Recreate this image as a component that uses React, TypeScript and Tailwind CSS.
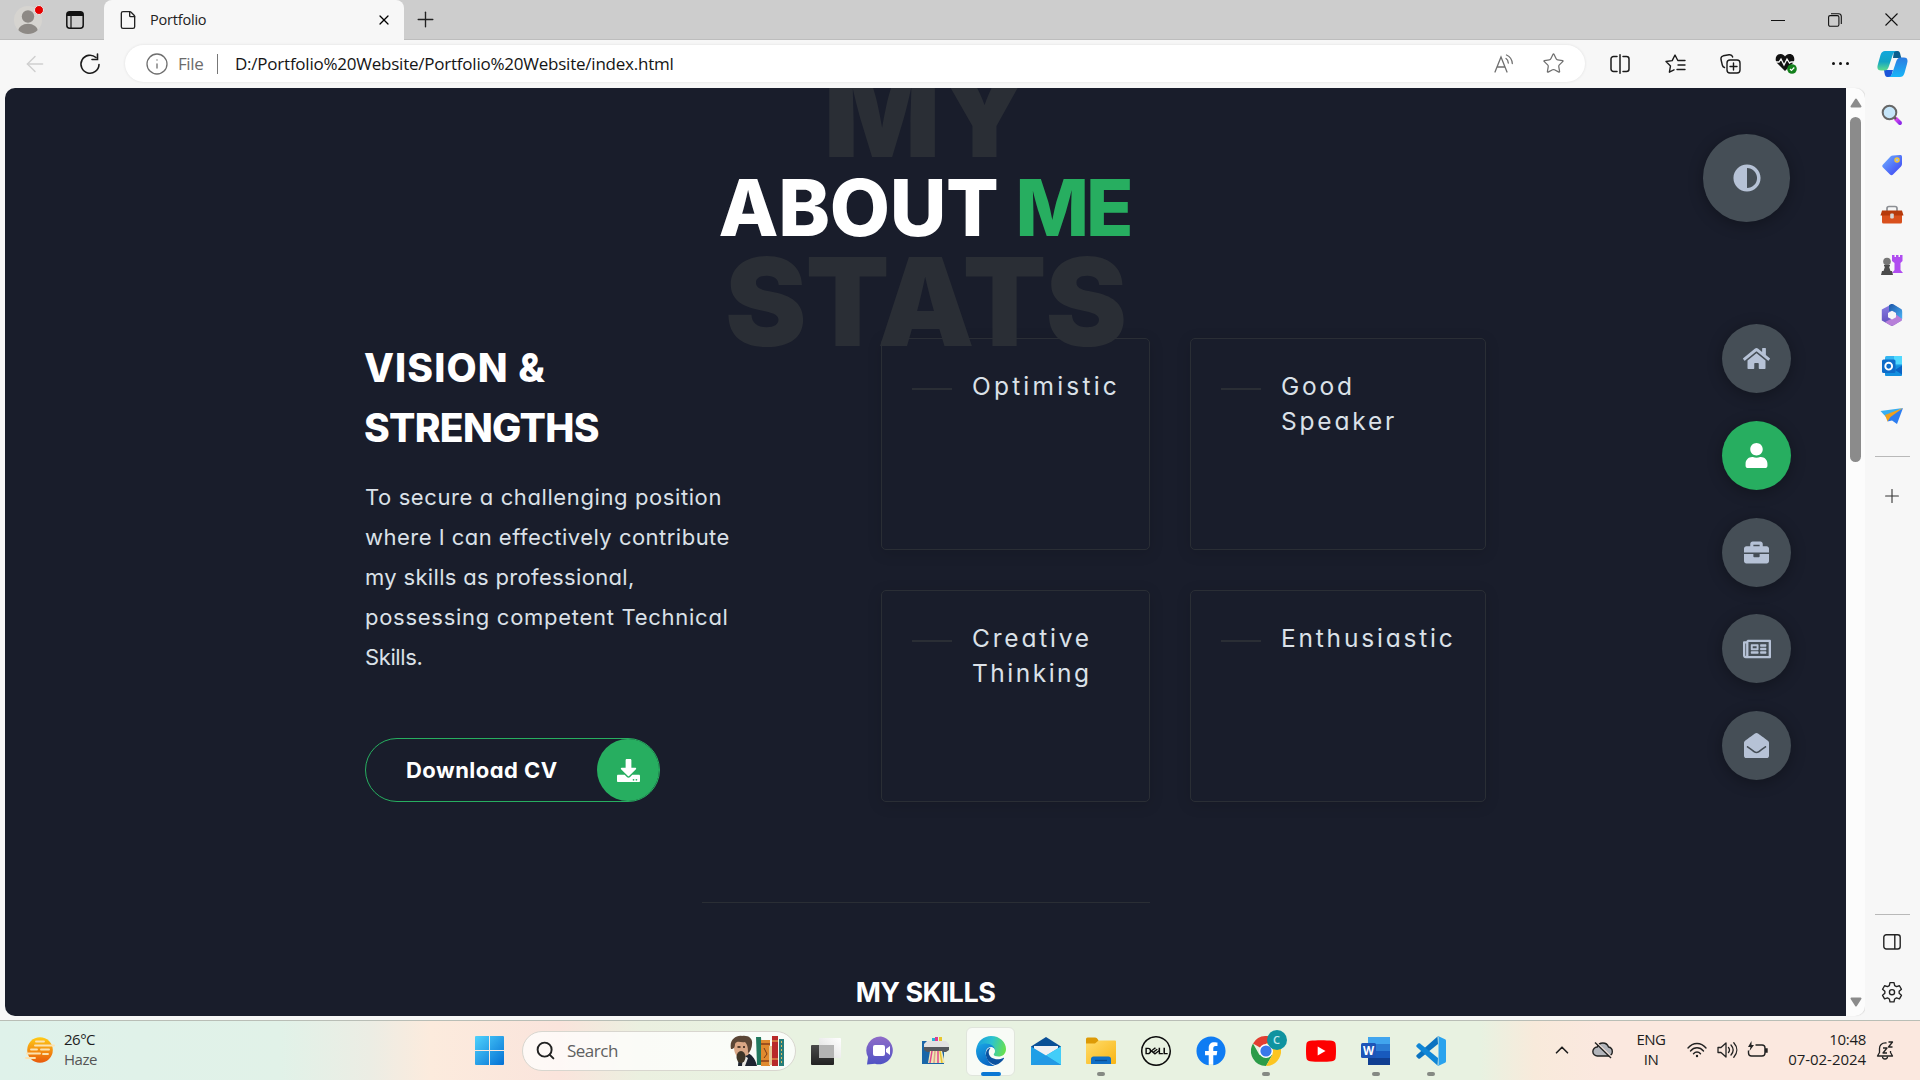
import type { ReactNode } from 'react';
import { ArrowLeft, ChevronUp, File, Info, Plus, Search, Star, X } from 'lucide-react';
import { FaAdjust, FaBriefcase, FaDownload, FaEnvelopeOpen, FaFacebook, FaHome, FaRegNewspaper, FaUser } from 'react-icons/fa';
import { SiDell } from 'react-icons/si';

/* ---------- Browser chrome ---------- */

function TabBar() {
  return (
    <div className="flex h-10 shrink-0 items-stretch border-b border-[#bdbdbd] bg-[#cdcdcd]">
      <div className="flex w-[104px] items-start pl-[14px] pt-[6px]">
        <div className="relative h-7 w-7">
          <svg width="28" height="28" viewBox="0 0 28 28">
            <defs>
              <clipPath id="avatar"><circle cx="14" cy="14" r="14" /></clipPath>
            </defs>
            <g clipPath="url(#avatar)">
              <rect width="28" height="28" fill="#d6d4d0" />
              <circle cx="14" cy="10.5" r="6.2" fill="#8d8985" />
              <ellipse cx="14" cy="25" rx="10" ry="7.2" fill="#8d8985" />
            </g>
          </svg>
          <span className="absolute -top-[1px] left-[20px] h-[10px] w-[10px] rounded-full border border-[#e8e8e8] bg-[#e60000]" />
        </div>
        <svg className="ml-6 mt-[5px]" width="18" height="18" viewBox="0 0 18 18" fill="none">
          <rect x="0.8" y="0.8" width="16.4" height="16.4" rx="3" stroke="#111" strokeWidth="1.5" />
          <path d="M1 5V3.5A2.5 2.5 0 0 1 3.5 1h11A2.5 2.5 0 0 1 17 3.500V5z" fill="#111" />
          <path d="M5 5v12" stroke="#111" strokeWidth="1.2" />
        </svg>
      </div>
      <div className="relative -mb-px flex w-[300px] items-center rounded-t-lg bg-[#f7f7f7] pl-[14px] pr-[12px]">
        <File className="h-[22px] w-[20px] text-[#222]" strokeWidth={1.6} />
        <span className="ml-[12px] font-['Open_Sans'] text-[14.5px] leading-5 tracking-[-0.2px] text-[#222]">Portfolio</span>
        <X className="ml-auto h-[16px] w-[16px] text-black" strokeWidth={1.9} />
      </div>
      <Plus className="ml-[9px] mt-[7px] h-[25px] w-[25px] text-[#222]" strokeWidth={1.3} />
      <div className="ml-auto flex items-center text-[#111]">
        <div className="flex w-[57px] justify-center"><svg width="14" height="14"><path d="M0 7.500h14" stroke="#111" strokeWidth="1" /></svg></div>
        <div className="flex w-[57px] justify-center">
          <svg width="14" height="14" viewBox="0 0 14 14" fill="none" stroke="#111" strokeWidth="1.1">
            <rect x="0.600" y="2.600" width="10.300" height="10.600" rx="1.500" />
            <path d="M3 .7h7.500a2.800 2.800 0 0 1 2.800 2.800V11" />
          </svg>
        </div>
        <div className="flex w-[57px] justify-center">
          <svg width="13" height="13" viewBox="0 0 13 13" stroke="#111" strokeWidth="1.1"><path d="M.5.5l12 12M12.500.5l-12 12" /></svg>
        </div>
      </div>
    </div>
  );
}

function Copilot() {
  return (
    <svg width="31" height="28" viewBox="0 0 31 28">
      <defs>
        <linearGradient id="cpA" x1="0" y1="0" x2="0" y2="1"><stop stopColor="#12a8dc" /><stop offset=".55" stopColor="#13a4c4" /><stop offset="1" stopColor="#5edc8c" /></linearGradient>
        <linearGradient id="cpB" x1="0" y1="0" x2="0" y2="1"><stop stopColor="#2c7be0" /><stop offset="1" stopColor="#18b6f8" /></linearGradient>
      </defs>
      <path d="M17 1h3.500c2 0 2.500 1.500 3 4l.8 3H16z" fill="#0b5f8e" />
      <path d="M14 27h-3.500c-2 0-2.500-1.500-3-4L7 20h9z" fill="#1b55d8" />
      <path d="M8 1h12c-3 0-4 3-5 6l-3 9c-1 3-2 4.500-5 4.500H4C0 20.500 0 17 1 14L3.500 5C4.500 2 6 1 8 1z" fill="url(#cpA)" />
      <path d="M23 27H11c3 0 4-3 5-6l3-9c1-3 2-4.500 5-4.500h3c4 0 4 3.500 3 6.500L27.500 23c-1 3-2.500 4-4.500 4z" fill="url(#cpB)" />
    </svg>
  );
}

function Toolbar() {
  return (
    <div className="flex h-12 shrink-0 items-center bg-[#f7f7f7] pb-px">
      <ArrowLeft className="ml-[22px] h-[26px] w-[26px] text-[#cfcfcf]" strokeWidth={1.3} />
      <svg className="ml-[31px]" width="22" height="22" viewBox="0 0 22 22" fill="none" stroke="#1b1b1b" strokeWidth="1.6" strokeLinecap="round">
        <path d="M20 11.500A9 9 0 1 1 17 4.500" />
        <path d="M18.500 1v5.500H13" />
      </svg>
      <div className="ml-[24px] flex h-[37px] w-[1460px] items-center rounded-full bg-white pl-[20px] pr-[20px] shadow-[0_0_3px_rgba(0,0,0,0.1)]">
        <Info className="h-[24px] w-[24px] text-[#6f6f6f]" strokeWidth={1.3} />
        <span className="ml-[9px] w-[30px] font-['Open_Sans'] text-[17px] tracking-[-0.4px] text-[#6b6b6b]">File</span>
        <span className="ml-[9px] h-[20px] w-px bg-[#777]" />
        <span className="ml-[17px] whitespace-nowrap font-['Open_Sans'] text-[17px] tracking-[-0.23px] text-[#151515]">
          D:/Portfolio%20Website/Portfolio%20Website/index.html
        </span>
        <svg className="ml-auto" width="20" height="20" viewBox="0 0 20 20" fill="none" stroke="#6f6f6f" strokeWidth="1.3" strokeLinecap="round">
          <path d="M1 18L7 3l6 15M3 13h8" />
          <path d="M12 4.500c1.500 1 2.200 2.500 2.300 4.500M12.500 1c3.300 1.500 5.500 4.500 5.800 8.500" />
        </svg>
        <Star className="ml-[28px] h-[23px] w-[23px] text-[#6f6f6f]" strokeWidth={1.3} />
      </div>
      <div className="ml-[7px] flex items-center">
        <div className="flex w-[55px] justify-center">
          <svg width="20" height="20" viewBox="0 0 20 20" fill="none" stroke="#1b1b1b" strokeWidth="1.500" strokeLinecap="round">
            <path d="M7 2.500H3.500a2.500 2.500 0 0 0-2.500 2.500v10a2.500 2.500 0 0 0 2.500 2.500H7M13 2.500h3.500A2.500 2.500 0 0 1 19 5v10a2.500 2.500 0 0 1-2.500 2.500H13M10 .8v18.400" />
          </svg>
        </div>
        <div className="flex w-[56px] justify-center">
          <svg width="21" height="20" viewBox="0 0 21 20" fill="none" stroke="#1b1b1b" strokeWidth="1.400" strokeLinecap="round" strokeLinejoin="round">
            <path d="M14 6.500h-1.200L10 1 7.200 6.600 1 7.500l4.500 4.400L4.400 18.200 9 15.800M14 6.500h6M13 11h7M12 15.500h8" />
          </svg>
        </div>
        <div className="flex w-[55px] justify-center">
          <svg width="21" height="20" viewBox="0 0 21 20" fill="none" stroke="#1b1b1b" strokeWidth="1.400" strokeLinecap="round">
            <rect x="7" y="6" width="13" height="13" rx="3" />
            <path d="M13.500 9v7M10 12.500h7" />
            <path d="M4.500 13.500C3 13 2.500 12 2.300 11L1 5.500C.7 3.500 1.500 2.300 3.300 1.800L9 .8c2-.3 3.200.5 3.700 2.200" />
          </svg>
        </div>
        <div className="flex w-[55px] justify-center">
          <svg width="22" height="21" viewBox="0 0 22 21">
            <path d="M10 18L2 10C-.5 7 .5 1 5.500 1 8 1 9.500 2.500 10 3.500 10.500 2.500 12 1 14.500 1c5 0 6 6 3.500 9z" fill="#111" />
            <path d="M0 9h4l2-3 3 6 3-6 2.500 4 1.500-1H20" fill="none" stroke="#f7f7f7" strokeWidth="1.300" />
            <circle cx="17" cy="16" r="4.800" fill="#13801c" />
            <path d="M15 16l1.500 1.500 2.800-3" fill="none" stroke="#fff" strokeWidth="1.200" />
          </svg>
        </div>
        <div className="flex w-[55px] justify-center gap-[4px]">
          <span className="h-[3px] w-[3px] rounded-full bg-[#111]" />
          <span className="h-[3px] w-[3px] rounded-full bg-[#111]" />
          <span className="h-[3px] w-[3px] rounded-full bg-[#111]" />
        </div>
      </div>
      <div className="ml-auto mr-[12px]"><Copilot /></div>
    </div>
  );
}

function SideTool({ children }: { children: ReactNode }) {
  return <div className="flex h-[50.1px] w-full items-center justify-center">{children}</div>;
}

function Sidebar() {
  return (
    <aside className="flex w-[55px] shrink-0 flex-col items-center bg-[#f7f7f7] pr-px pt-[2px]">
      <SideTool>
        <svg width="22" height="22" viewBox="0 0 22 22">
          <defs><linearGradient id="hnd" x1="0" y1="0" x2="1" y2="1"><stop stopColor="#e34df0" /><stop offset="1" stopColor="#8f2be8" /></linearGradient></defs>
          <path d="M14.500 14.500l4.500 4.500" stroke="url(#hnd)" strokeWidth="4" strokeLinecap="round" />
          <path d="M12 12l3 3" stroke="#555" strokeWidth="2" />
          <circle cx="8.500" cy="8.500" r="6.800" fill="#c5e5f9" stroke="#666" strokeWidth="2" />
        </svg>
      </SideTool>
      <SideTool>
        <svg width="22" height="22" viewBox="0 0 22 22">
          <defs><linearGradient id="tag" x1="0" y1="0" x2="1" y2="1"><stop stopColor="#6fb4ff" /><stop offset="1" stopColor="#3b3cf2" /></linearGradient></defs>
          <path d="M12 1.500l7-.5c1.500 0 2 .6 2 2v7c0 1-.3 1.700-1 2.400l-8 8c-1 1-2 1-3 0l-7-7c-1-1-1-2 0-3l7.500-8c.7-.6 1.500-.9 2.500-.9z" fill="url(#tag)" />
          <circle cx="16" cy="6" r="2" fill="#9abdf5" stroke="#f4c534" strokeWidth="1.500" />
        </svg>
      </SideTool>
      <SideTool>
        <svg width="24" height="20" viewBox="0 0 24 20">
          <path d="M7 6V3.500C7 2 8 1.500 9 1.500h6c1 0 2 .5 2 2V6" fill="none" stroke="#8c8f94" strokeWidth="1.700" />
          <path d="M2 9h20v8a1.500 1.500 0 0 1-1.500 1.500h-17A1.500 1.500 0 0 1 2 17z" fill="#d9501d" />
          <path d="M2 5.500h20l1.500 5H.5z" fill="#b63a0c" />
          <rect x="10.200" y="8.500" width="3.600" height="5" rx="1" fill="#d6d6d6" />
        </svg>
      </SideTool>
      <SideTool>
        <svg width="24" height="24" viewBox="0 0 24 24">
          <path d="M12 2h2.500v2H16V2h2.500v2H20V2h2.500v6l-2 2v7l2.500 3H12l2.500-3v-7l-2.500-2z" fill="#b04df0" />
          <circle cx="7" cy="8.500" r="3.800" fill="#777" />
          <path d="M4 12h6v1.500H9L10.500 18h1.500l1 4H1l1-4h1.500L5 13.500H4z" fill="#4b4b4b" />
        </svg>
      </SideTool>
      <SideTool>
        <svg width="22" height="24" viewBox="0 0 22 24">
          <defs>
            <linearGradient id="mA" x1="0" y1="0" x2="0" y2="1"><stop stopColor="#8a7fe6" /><stop offset="1" stopColor="#5c4bb8" /></linearGradient>
            <linearGradient id="mB" x1="0" y1="0" x2="1" y2="1"><stop stopColor="#1d56a8" /><stop offset="1" stopColor="#4ab2f5" /></linearGradient>
          </defs>
          <path d="M11 1l9.500 5.500v11L11 23 .8 17.500v-11z" fill="url(#mA)" />
          <path d="M8 2.500C9 1 12 .5 13.500 2L20 6c1 .8 1.200 1.500 1.200 3v7L14.500 12V9L8 8z" fill="url(#mB)" />
          <path d="M21 16c0 1.500-1 2-2 2.600L13.500 22c-1.500 1-3.500 1-5 0L4 19l10-5 .5-3z" fill="#b77fd9" />
          <path d="M11 7.800l4 2.200v4.200l-4 2.300-4-2.300V10z" fill="#f7f7f7" />
        </svg>
      </SideTool>
      <SideTool>
        <svg width="22" height="22" viewBox="0 0 22 22">
          <rect x="4" y="1" width="17" height="20" rx="1.500" fill="#33b5f1" />
          <path d="M13 1h8v8h-8z" fill="#50d9ff" />
          <path d="M4 11l17-1v9.500a1.500 1.500 0 0 1-1.500 1.500H5.500A1.500 1.500 0 0 1 4 19.500z" fill="#1490df" />
          <path d="M21 10.500L14 15l7 4.500z" fill="#0a63c5" />
          <rect x="1" y="4.500" width="13.500" height="13.500" rx="1.500" fill="#0f6cc9" />
          <circle cx="7.700" cy="11.200" r="3.400" fill="none" stroke="#fff" strokeWidth="1.900" />
        </svg>
      </SideTool>
      <SideTool>
        <svg width="24" height="18" viewBox="0 0 24 18">
          <path d="M.5 4L23 1 6 10z" fill="#38aef0" />
          <path d="M5 8L23 1 7.500 14.500z" fill="#f0a01c" />
          <path d="M7.500 14.500l3-4.500L23 1l-6 16-5-3.500z" fill="#2c7df0" />
        </svg>
      </SideTool>
      <div className="mt-[15px] h-px w-[35px] shrink-0 bg-[#b9b9b9]" />
      <Plus className="mt-[28px] h-[22px] w-[22px] text-[#333]" strokeWidth={1.200} />
      <div className="mt-auto h-px w-[35px] shrink-0 bg-[#b9b9b9]" />
      <svg className="mt-[19px] shrink-0" width="18" height="16" viewBox="0 0 18 16" fill="none" stroke="#222" strokeWidth="1.400">
        <rect x="0.800" y="0.800" width="16.400" height="14.200" rx="2.500" />
        <path d="M11.800 1v14" />
      </svg>
      <svg className="mb-[17px] mt-[31px] shrink-0" width="22" height="22" viewBox="0 0 24 24" fill="none" stroke="#222" strokeWidth="1.500" strokeLinejoin="round">
        <path d="M9.800 1.800h4.400l.7 3.200 2 1.200 3.200-1 2.200 3.800-2.500 2.200v2.200l2.500 2.200-2.200 3.800-3.200-1-2 1.200-.7 3.200H9.800l-.7-3.200-2-1.200-3.200 1-2.200-3.800 2.500-2.200v-2.200L1.700 9l2.200-3.800 3.200 1 2-1.200z" />
        <circle cx="12" cy="12.200" r="2.800" />
      </svg>
    </aside>
  );
}

function Scrollbar() {
  return (
    <div className="flex w-[19px] shrink-0 flex-col items-center rounded-r-[10px] bg-[#fcfcfc] pt-[10px] shadow-[1px_0_1px_#dcdcdc]">
      <svg width="12" height="10"><path d="M6 1.500L10.500 8.500h-9z" fill="#8b8b8b" stroke="#8b8b8b" strokeWidth="2" strokeLinejoin="round" /></svg>
      <div className="mt-[9px] h-[345px] w-[11px] rounded-full bg-[#8b8b8b]" />
      <svg className="mb-[9px] mt-auto" width="12" height="10"><path d="M6 8.500L10.500 1.500h-9z" fill="#8b8b8b" stroke="#8b8b8b" strokeWidth="2" strokeLinejoin="round" /></svg>
    </div>
  );
}

/* ---------- Portfolio page ---------- */

function StrengthCard({ children }: { children: ReactNode }) {
  return (
    <div className="flex h-[212px] gap-5 rounded-[5px] border border-[#2a2e35] p-[30px] shadow-[0_3px_15px_rgba(0,0,0,0.12)]">
      <span className="mt-[19px] h-[2px] w-10 shrink-0 bg-[#2a2e35]" />
      <p className="text-[24.5px] leading-[35px] tracking-[2.8px] text-[#dbe1e8]">{children}</p>
    </div>
  );
}

function Control({ active, children }: { active?: boolean; children: ReactNode }) {
  return (
    <div className={active
      ? 'flex h-[69px] w-[69px] items-center justify-center rounded-full bg-[#27ae60] text-white shadow-[0_3px_15px_rgba(0,0,0,0.3)]'
      : 'flex h-[69px] w-[69px] items-center justify-center rounded-full bg-[#454e56] text-[#b6c2d6] shadow-[0_3px_15px_rgba(0,0,0,0.3)]'}>
      {children}
    </div>
  );
}

function Page() {
  return (
    <main className="relative flex min-w-0 flex-1 flex-col items-center overflow-hidden rounded-l-[10px] bg-[#191d2b] font-['Inter',sans-serif] text-white [font-feature-settings:'cv11']">
      <header className="relative mt-[60px] flex h-[120px] w-full items-center justify-center">
        <div className="absolute -top-[130px] left-0 right-0 text-center text-[122.5px] font-black leading-[189px] text-[#2a2e35]">
          <div className="tracking-[-4px]">MY</div>
          <div className="tracking-[-1px]">STATS</div>
        </div>
        <h1 className="relative mr-[2px] whitespace-nowrap text-[78px] font-extrabold leading-[120px] tracking-[-0.3px]">
          ABOUT <span className="tracking-[-3px] text-[#27ae60]">ME</span>
        </h1>
      </header>
      <div className="mt-[70px] flex w-[1121px] justify-between">
        <section>
          <h2 className="-ml-px text-[39px] font-extrabold leading-[60px]">
            <span className="block tracking-[1.1px]">VISION &amp;</span>
            <span className="block tracking-[-0.7px]">STRENGTHS</span>
          </h2>
          <p className="mt-[19px] w-[380px] whitespace-nowrap text-[22px] leading-10 text-[#dbe1e8]">
            <span className="block tracking-[0.6px]">To secure a challenging position</span>
            <span className="block tracking-[0.48px]">where I can effectively contribute</span>
            <span className="block tracking-[0.33px]">my skills as professional,</span>
            <span className="block tracking-[0.72px]">possessing competent Technical</span>
            <span className="block tracking-[-0.4px]">Skills.</span>
          </p>
          <div className="mt-[61px] flex h-16 w-[295px] items-center justify-between rounded-full border border-[#27ae60] pl-[40px]">
            <span className="whitespace-nowrap text-[22px] font-bold tracking-[0.45px]">Download CV</span>
            <span className="flex h-[62px] w-[62px] items-center justify-center rounded-full bg-[#27ae60]"><FaDownload size={23} /></span>
          </div>
        </section>
        <section className="grid grid-cols-[269px_296px] content-start gap-10">
          <StrengthCard><span className="tracking-[3.2px]">Optimistic</span></StrengthCard>
          <StrengthCard>Good<br />Speaker</StrengthCard>
          <StrengthCard>Creative<br /><span className="tracking-[2.5px]">Thinking</span></StrengthCard>
          <StrengthCard>Enthusiastic</StrengthCard>
        </section>
      </div>
      <div className="mt-[100px] h-px w-[448px] bg-[#2a2e35]" />
      <h3 className="mt-[70px] text-[27px] font-bold leading-[40px] tracking-[-0.5px]">MY SKILLS</h3>

      <div className="absolute right-[56px] top-[46px] flex h-[88px] w-[87px] items-center justify-center rounded-full bg-[#454e56] text-[28px] text-[#b6c2d6] shadow-[0_3px_15px_rgba(0,0,0,0.3)]">
        <FaAdjust />
      </div>
      <nav className="absolute right-[55px] top-[236px] flex flex-col gap-[27.8px]">
        <Control><FaHome size={27} /></Control>
        <Control active><FaUser size={25} /></Control>
        <Control><FaBriefcase size={25} /></Control>
        <Control><FaRegNewspaper size={28} /></Control>
        <Control><FaEnvelopeOpen size={25} /></Control>
      </nav>
    </main>
  );
}

/* ---------- Taskbar ---------- */

function AppSlot({ children, mark }: { children: ReactNode; mark?: 'open' | 'active' }) {
  return (
    <div className="relative flex h-[50px] w-[55px] items-center justify-center">
      {mark === 'active' && <span className="absolute inset-x-[3px] top-[1px] h-[49px] rounded-[6px] border border-[#e0e5dc] bg-white/70" />}
      <span className="relative flex">{children}</span>
      {mark === 'active' && <span className="absolute bottom-0 h-[4px] w-[20px] rounded-full bg-[#0b78d4]" />}
      {mark === 'open' && <span className="absolute bottom-0 h-[4px] w-[8px] rounded-full bg-[#858a83]" />}
    </div>
  );
}

function Taskbar() {
  return (
    <footer className="flex h-[60px] shrink-0 items-center border-t border-[#b9beb6] bg-[linear-gradient(90deg,#dff2ea_0px,#e1f2e8_280px,#ecede4_370px,#fcebdd_430px,#fae4dc_560px,#ebf0e0_640px,#e8f2e1_760px,#e8f2e1_1480px,#f8eadb_1535px,#fbe8df_1600px)] font-['Open_Sans',sans-serif] text-[#1d1d1d]">
      <div className="flex w-[462px] items-center pb-px pl-[25px]">
        <svg width="30" height="28" viewBox="0 0 30 28">
          <defs><linearGradient id="sun" x1="0" y1="0" x2="0" y2="1"><stop stopColor="#ffcb16" /><stop offset="1" stopColor="#e8590c" /></linearGradient></defs>
          <circle cx="15" cy="14" r="12.800" fill="url(#sun)" />
          <g stroke="#fbe2b0" strokeWidth="1.900" strokeLinecap="round">
            <path d="M11 5.500h8M10 9.500h19M6 13.500h6M16 13.500h8M2 17.500h13M18 18h5M1 22h9" />
          </g>
        </svg>
        <div className="-mt-[3px] ml-[9px] text-[15px] leading-[20px] tracking-[-0.5px]">
          <div>26°C</div>
          <div className="text-[#555]">Haze</div>
        </div>
      </div>
      <AppSlot>
        <svg width="29" height="29" viewBox="0 0 29 29">
          <defs><linearGradient id="win" x1="0" y1="0" x2="1" y2="1"><stop stopColor="#4fd2fc" /><stop offset="1" stopColor="#0470d4" /></linearGradient></defs>
          <path d="M1 0h13v14H0V1a1 1 0 0 1 1-1zM15 0h13a1 1 0 0 1 1 1v13H15zM0 15h14v14H1a1 1 0 0 1-1-1zM15 15h14v13a1 1 0 0 1-1 1H15z" fill="url(#win)" />
        </svg>
      </AppSlot>
      <div className="ml-[5px] flex h-[40px] w-[274px] items-center rounded-full border border-[#d8d6cf] bg-white/75 pl-[12px] pr-[10px]">
        <Search className="h-[21px] w-[21px] text-[#222]" strokeWidth={2.200} />
        <span className="ml-[11px] text-[17px] tracking-[-0.5px] text-[#606060]">Search</span>
        <svg className="ml-auto" width="55" height="32" viewBox="0 0 55 32">
          <path d="M9 19l9-1c3 2 7 4 9 13H8z" fill="#1e2430" />
          <path d="M13 20l5 3-3 8h-3z" fill="#e9e7e2" />
          <path d="M4 8c1-5 13-7 16-2 2 4 1 10-2 14l-8 3c-4-1-6-6-6-11z" fill="#d9a786" />
          <path d="M1 14C-1 5 6 0 12 1c7-1 11 3 10 8 0 4-2 8-4 9 0-4 0-8-3-11-4 1-8-2-10 2 0 3-1 5-4 5z" fill="#5b4636" />
          <ellipse cx="11" cy="22" rx="4.500" ry="6" fill="#3e3527" />
          <path d="M7.500 12h3M13 12h2" stroke="#2b1c14" strokeWidth="1.400" />
          <path d="M26 2h5l2 28h-6z" fill="#22795f" />
          <rect x="31" y="5" width="9" height="26" fill="#e08a2e" /><path d="M31 9h9M31 26h9" stroke="#8a3f18" strokeWidth="1.500" />
          <path d="M34 13l3 6-3 4" stroke="#7c3a16" fill="none" />
          <rect x="39" y="11" width="3" height="19" fill="#e6c593" />
          <rect x="42" y="1" width="6" height="30" fill="#b8292a" /><path d="M42 6h6M42 24h6" stroke="#f0bd50" strokeWidth="1.200" />
          <rect x="49" y="4" width="5" height="27" fill="#277c78" /><path d="M51.500 6v23" stroke="#d9b763" strokeDasharray="2 2" />
        </svg>
      </div>
      <div className="ml-[2px] flex">
        <AppSlot>
          <svg width="30" height="28" viewBox="0 0 30 28">
            <defs>
              <linearGradient id="tvA" x1="0" y1="0" x2="0" y2="1"><stop stopColor="#4a4a4a" /><stop offset="1" stopColor="#222" /></linearGradient>
              <linearGradient id="tvB" x1="1" y1="0" x2="0" y2="1"><stop stopColor="#fff" /><stop offset="1" stopColor="#dcdcdc" /></linearGradient>
            </defs>
            <rect y="8" width="23" height="20" rx="1" fill="url(#tvA)" />
            <rect x="8" y="1" width="22" height="20" rx="1" fill="url(#tvB)" />
            <rect x="8" y="8" width="15" height="13" fill="#b4b4b4" />
          </svg>
        </AppSlot>
        <AppSlot>
          <svg width="29" height="29" viewBox="0 0 29 29">
            <defs><linearGradient id="chat" x1="0" y1="0" x2="0" y2="1"><stop stopColor="#8f6cc8" /><stop offset="1" stopColor="#4f52c4" /></linearGradient></defs>
            <path d="M15 0.500A14 14 0 1 1 9 27.800L1 28.500 2 21A14 14 0 0 1 15 .5z" fill="url(#chat)" />
            <rect x="7" y="9" width="12" height="11" rx="2" fill="#fff" /><path d="M20 13l4-3v9l-4-3z" fill="#fff" />
          </svg>
        </AppSlot>
        <AppSlot>
          <svg width="29" height="29" viewBox="0 0 29 29">
            <rect x="1" y="5" width="22" height="23" fill="#1966a8" />
            <rect x="11" y="2" width="3" height="3" fill="#2ab0d8" /><rect x="14" y="1" width="3" height="4" fill="#dd3d92" /><rect x="18" y="1" width="3" height="4" fill="#e9c72d" />
            <path d="M6 5h19l3 3v5H3V8z" fill="#e2e2e2" />
            <path d="M3 11h25v3l-3 2H6l-3-2z" fill="#55585d" />
            <path d="M9 15h12l3 12H7z" fill="#efe7b5" />
            <path d="M11 15l-2 12" stroke="#e0468d" strokeWidth="1.500" /><path d="M14 15l-1 12" stroke="#e0a08d" strokeWidth="1.500" /><path d="M17 15v12" stroke="#e0468d" strokeWidth="1.500" /><path d="M19 15l2 12" stroke="#e9c72d" strokeWidth="1.500" />
          </svg>
        </AppSlot>
        <AppSlot mark="active">
          <svg width="30" height="30" viewBox="0 0 30 30">
            <defs>
              <linearGradient id="edA" x1="0" y1="0.300" x2="1" y2="0.500"><stop stopColor="#1a9fe0" /><stop offset=".5" stopColor="#2cc3cf" /><stop offset="1" stopColor="#66e04f" /></linearGradient>
              <linearGradient id="edB" x1="0" y1="0" x2="0.500" y2="1"><stop stopColor="#1ba7e5" /><stop offset="1" stopColor="#0867c4" /></linearGradient>
            </defs>
            <path d="M.3 13C1.500 5 8 0 15 0c9 0 15 6.500 15 13 0 5-3.500 7.500-7.500 7.500-3 0-4.800-1-4.800-2 0-.8 1.300-1.200 1.300-3.500 0-3-3-5.500-7.500-5.500C6 9.500 1.500 11 .3 13z" fill="url(#edA)" />
            <path d="M0 15C0 10 5 7.500 10 7.500c5 0 9 3 9 7 0-2-2-3.500-4-3.500-4 0-6 4-5 8.500 1 5 5 9.500 9 10-1 .4-2.500.5-4 .5C6.500 30 0 23.500 0 15z" fill="url(#edB)" />
            <path d="M10 17c-.8 6 4 11 9.500 12 4-1 7-4 8.500-6.500.3-.6-.2-.8-.8-.5-5 2.500-14 1.500-14.500-5.500 0-2 .8-3.500 2-4.800-2.500.3-4.500 2.500-4.700 5.300z" fill="#0c52a0" />
          </svg>
        </AppSlot>
        <AppSlot>
          <svg width="30" height="28" viewBox="0 0 30 28">
            <path d="M0 9.500L15 0l15 9.500v5H0z" fill="#0a4f96" />
            <path d="M3 9h24v8l-12 6L3 17z" fill="#f1f1f3" />
            <path d="M0 9.500l15 9 15-9V28H0z" fill="#1f9fe6" />
            <path d="M15 18.500l15-9V28z" fill="#43cdf8" />
            <path d="M0 28l15-9.500L30 28z" fill="#2399e4" />
          </svg>
        </AppSlot>
        <AppSlot mark="open">
          <svg width="30" height="28" viewBox="0 0 30 28">
            <defs><linearGradient id="fold" x1="0" y1="0" x2="1" y2="1"><stop stopColor="#ffdc6b" /><stop offset="1" stopColor="#f9b514" /></linearGradient></defs>
            <path d="M0 2a1.500 1.500 0 0 1 1.500-1.500H9c1.500 0 2.500 1 3.500 3V8H0z" fill="#dd9a06" />
            <path d="M0 6.500h9l3.500-3H29a1 1 0 0 1 1 1V26a1 1 0 0 1-1 1H1a1 1 0 0 1-1-1z" fill="url(#fold)" />
            <path d="M5 27v-5c0-1.500 1-2.500 2.500-2.500h15c1.500 0 2.500 1 2.500 2.500v5z" fill="#0f6fc6" />
            <path d="M9 23.500h12" stroke="#0b4d91" strokeWidth="1.300" />
          </svg>
        </AppSlot>
        <AppSlot><SiDell size={30} color="#0b0b0b" /></AppSlot>
        <AppSlot>
          <span className="flex rounded-full bg-[radial-gradient(circle,#fff_60%,transparent_62%)]"><FaFacebook size={30} color="#0f7cf3" /></span>
        </AppSlot>
        <AppSlot mark="open">
          <svg width="30" height="30" viewBox="0 0 30 30">
            <path d="M15 15L2 7.500A15 15 0 0 1 28 7.500H15z" fill="#e23e31" />
            <path d="M15 15l6.500 3.700L15 30A15 15 0 0 1 2 7.500L8.500 19z" fill="#2b9c48" />
            <path d="M15 7.500h13A15 15 0 0 1 15 30l6.500-11.300z" fill="#fcc521" />
            <circle cx="15" cy="15" r="7" fill="#fff" /><circle cx="15" cy="15" r="5.600" fill="#3878ea" />
          </svg>
          <span className="absolute -top-[6px] left-[16px] flex h-[20px] w-[20px] items-center justify-center rounded-full bg-[#0f93a0] text-[11px] font-semibold leading-none text-[#c4eaee]">C</span>
        </AppSlot>
        <AppSlot>
          <svg width="30" height="22" viewBox="0 0 30 22"><path d="M4 .7C10 0 20 0 26 .7c2.500.3 3.500 1.500 3.700 4 .4 4 .4 8.500 0 12.500-.2 2.500-1.200 3.700-3.700 4-6 .7-16 .7-22 0-2.500-.3-3.500-1.500-3.700-4-.4-4-.4-8.500 0-12.500C.5 2.200 1.500 1 4 .7z" fill="#fe0000" /><path d="M11.700 6.500l7.800 4.500-7.800 4.500z" fill="#fff" /></svg>
        </AppSlot>
        <AppSlot mark="open">
          <svg width="30" height="28" viewBox="0 0 30 28">
            <rect x="7" width="22" height="7" fill="#41a5ee" /><rect x="7" y="7" width="22" height="7" fill="#2b7cd3" /><rect x="7" y="14" width="22" height="7" fill="#185abd" /><rect x="7" y="21" width="22" height="7" fill="#103f91" />
            <rect y="6" width="15" height="15" rx="1.500" fill="#1d55b8" />
            <text x="7.500" y="17.800" textAnchor="middle" fontFamily="Open Sans" fontWeight="700" fontSize="11.500" fill="#fff">W</text>
          </svg>
        </AppSlot>
        <AppSlot mark="open">
          <svg width="30" height="30" viewBox="0 0 30 30">
            <path d="M22 8L4 22.500c-.6.400-1.200.4-1.700 0L.7 21c-.6-.6-.6-1.300 0-1.900L21.500.5z" fill="#0a72c0" />
            <path d="M22 22L4 7.500c-.6-.4-1.200-.4-1.700 0L.7 9c-.6.600-.6 1.300 0 1.900l20.800 18.600z" fill="#0f86d6" />
            <path d="M22.500.2L29 3.200c.6.300 1 .8 1 1.500v20.600c0 .7-.4 1.200-1 1.500l-6.500 3c-.8.300-1.200.1-1.500-.3.700.4 1.500-.2 1.500-1V1.500c0-.8-.8-1.400-1.500-1 .3-.4.900-.6 1.500-.3z" fill="#2aa3ee" />
          </svg>
        </AppSlot>
      </div>
      <div className="ml-auto flex items-center pb-px">
        <ChevronUp className="h-[22px] w-[22px]" strokeWidth={1.800} />
        <svg className="ml-[19px]" width="22" height="18" viewBox="0 0 22 18">
          <path d="M5.500 15a4.500 4.500 0 0 1-.3-9A6 6 0 0 1 16.500 6a4.600 4.600 0 0 1 .3 9z" fill="#b3b5bb" stroke="#222" strokeWidth="1.400" />
          <path d="M4 1L20 16.500" stroke="#fbe8df" strokeWidth="1.400" /><path d="M3 1.500L19 17" stroke="#222" strokeWidth="1.400" />
        </svg>
        <div className="-mt-[2px] ml-[22px] w-[30px] text-center text-[15px] leading-[20px] tracking-[-0.5px]">
          <div>ENG</div>
          <div>IN</div>
        </div>
        <svg className="ml-[21px]" width="20" height="16" viewBox="0 0 20 16" fill="none" stroke="#222" strokeWidth="1.400" strokeLinecap="round">
          <path d="M1 6C6 0 14 0 19 6M3.500 9c3.700-4.300 9.300-4.300 13 0M6.500 11.700c2-2.200 5-2.200 7 0" /><circle cx="10" cy="14" r="1.200" fill="#222" stroke="none" />
        </svg>
        <svg className="ml-[10px]" width="21" height="18" viewBox="0 0 21 18" fill="none" stroke="#222" strokeWidth="1.300" strokeLinecap="round" strokeLinejoin="round">
          <path d="M1 6.500h3L9 2v14l-5-4.500H1zM11.500 6.500c1.200 1.500 1.200 3.500 0 5M14 4c2.600 3 2.600 7 0 10M16.800 1.800c4 4.500 4 10 0 14.400" />
        </svg>
        <svg className="ml-[9px]" width="21" height="18" viewBox="0 0 21 18" fill="none" stroke="#222" strokeWidth="1.400">
          <path d="M8.500 4H15a3 3 0 0 1 3 3V12a3 3 0 0 1-3 3H4.500a3 3 0 0 1-3-3V9.500" />
          <path d="M18.500 8h1.500v3h-1.500z" fill="#222" /><path d="M4.500 0L1 6h2.500L2.500 10 7 4H4.500z" fill="#222" stroke="none" />
        </svg>
        <div className="-mt-[3px] ml-[18px] w-[80px] whitespace-nowrap text-right text-[15px] leading-[20px]">
          <div className="tracking-[-0.3px]">10:48</div>
          <div className="tracking-[-0.05px]">07-02-2024</div>
        </div>
        <svg className="ml-[10px] mr-[25px]" width="19" height="19" viewBox="0 0 19 19" fill="none" stroke="#222" strokeWidth="1.300" strokeLinejoin="round">
          <path d="M10.500 2C5.500 1.500 3.500 4.500 3.500 7.500v4L1.500 15h15l-2-3.500V10" /><path d="M6.500 15.500a2.500 2.500 0 0 0 5 0" />
          <path d="M7 7h4l-4 5h4M12.500 1h4l-4 5h4" />
        </svg>
      </div>
    </footer>
  );
}

export default function App() {
  return (
    <div className="flex h-[1080px] w-[1920px] flex-col overflow-hidden bg-[#f7f7f7]">
      <TabBar />
      <Toolbar />
      <div className="flex min-h-0 flex-1">
        <div className="flex min-w-0 flex-1 pb-[4px] pl-[5px]">
          <Page />
          <Scrollbar />
        </div>
        <Sidebar />
      </div>
      <Taskbar />
    </div>
  );
}
